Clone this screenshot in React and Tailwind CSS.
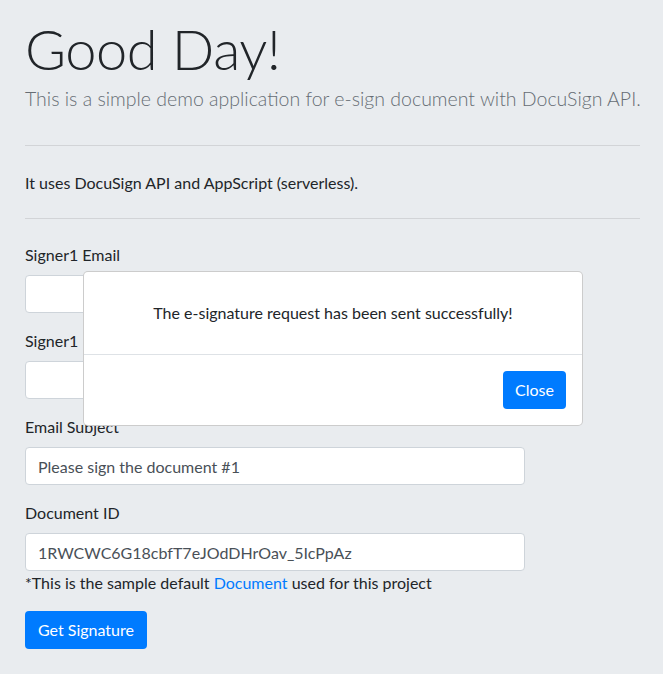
import React from 'react';

const font = { fontFamily: 'Lato, "Noto Sans", sans-serif' };

const Field = ({ label, value }) => (
  <div className="mb-4">
    <label className="block mb-2 leading-6">{label}</label>
    <input
      readOnly
      value={value}
      className="block w-[500px] h-[38px] px-3 py-1.5 bg-white border border-[#ced4da] rounded text-[#495057] leading-6 outline-none"
    />
  </div>
);

const App = () => {
  return (
    <div
      className="relative min-h-screen bg-[#e9ecef] text-[#212529] text-base pl-[25px] pr-[23px] pt-[15px]"
      style={font}
    >
      <h1 className="text-[56px] font-light leading-[1.2] mb-[2px] tracking-[-0.5px]">Good Day!</h1>
      <p className="text-[19.5px] font-light text-[#666d74] leading-[30px] whitespace-nowrap">
        This is a simple demo application for e-sign document with DocuSign API.
      </p>
      <hr className="mt-[31px] mb-[25px] border-t border-[#d2d4d7]" />
      <p className="leading-6 mb-[23px]">It uses DocuSign API and AppScript (serverless).</p>
      <hr className="mb-[24px] border-t border-[#d2d4d7]" />

      <form>
        <Field label="Signer1 Email" value="" />
        <Field label="Signer1 Name" value="" />
        <Field label="Email Subject" value="Please sign the document #1" />
        <div className="mb-4">
          <label className="block mb-2 leading-6">Document ID</label>
          <input
            readOnly
            value="1RWCWC6G18cbfT7eJOdDHrOav_5IcPpAz"
            className="block w-[500px] h-[38px] px-3 py-1.5 bg-white border border-[#ced4da] rounded text-[#495057] leading-6 outline-none"
          />
          <p className="leading-6">
            *This is the sample default <a className="text-[#007bff]">Document</a> used for this project
          </p>
        </div>
        <button
          type="button"
          className="h-[38px] px-[13px] bg-[#007bff] text-white rounded leading-6"
        >
          Get Signature
        </button>
      </form>

      {/* Success modal */}
      <div className="absolute left-[83px] top-[271px] w-[500px] bg-white border border-[rgba(0,0,0,0.2)] rounded-[5px]">
        <div className="py-[29px] text-center leading-6">
          The e-signature request has been sent successfully!
        </div>
        <div className="flex justify-end border-t border-[#dee2e6] px-4 py-4">
          <button type="button" className="h-[38px] px-3 bg-[#007bff] text-white rounded leading-6">
            Close
          </button>
        </div>
      </div>
    </div>
  );
};

export default App;
